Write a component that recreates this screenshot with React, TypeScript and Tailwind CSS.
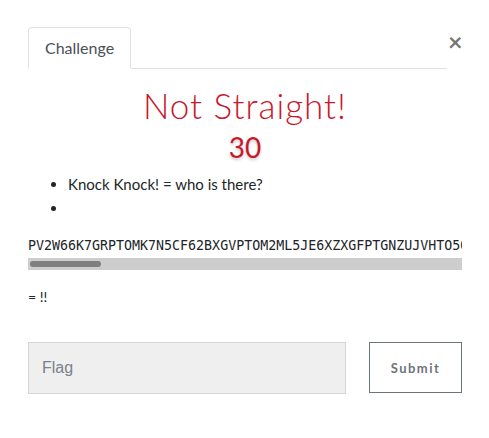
export default function App() {
  const code =
    'PV2W66K7GRPTOMK7N5CF62BXGVPTOM2ML5JE6XZXGFPTGNZUJVHTO5QXGZQXGFPTOMK7N5CF62BXGVPTOM2ML5JE6XZXG';

  return (
    <div className="h-[438px] w-[489px] bg-white font-['Lato',sans-serif] text-[#212529]">
      <div className="pl-[28px] pr-[27px] pt-[27px]">
        <div className="flex items-start">
          <div className="flex flex-1 border-b border-[#dee2e6]">
            <div className="-mb-px rounded-t-[4px] border border-[#dee2e6] border-b-white bg-white px-[16px] pb-[10px] pt-[9px] text-[16px] leading-[21px] text-[#495057]">
              Challenge
            </div>
          </div>
          <button className="ml-[1px] mt-[3px] w-[14px] text-[25px] font-bold leading-[22px] text-[#777]">
            ×
          </button>
        </div>

        <div className="pt-[14px] text-center">
          <h1 className="font-['Lato',sans-serif] text-[35px] font-light leading-[44px] tracking-[1px] text-[#c9182b]">
            Not Straight!
          </h1>
          <div className="mt-[3px] text-[28px] leading-[34px] text-[#c9182b] [text-shadow:0_2px_3px_rgba(0,0,0,0.2)]">
            30
          </div>
        </div>

        <ul className="mt-[8px] list-disc pl-[40px] text-[15px] leading-[24px]">
          <li>Knock Knock! = who is there?</li>
          <li>&nbsp;</li>
        </ul>

        <div className="mt-[17px]">
          <pre className="overflow-hidden whitespace-pre font-['DejaVu_Sans_Mono',monospace] text-[13.3px] leading-[17px] text-[#212529]">
            {code}
          </pre>
          <div className="mt-[4px] flex h-[12px] items-center bg-[#cdcdcd] px-[2px]">
            <div className="h-[6px] w-[71px] rounded-full bg-[#7f7f7f]" />
          </div>
        </div>

        <p className="mt-[17px] text-[14px] leading-[20px]">= !!</p>

        <div className="mt-[35px] flex items-stretch gap-[23px]">
          <input
            placeholder="Flag"
            className="h-[52px] w-[318px] border border-[#d5d5d5] bg-[#efefef] px-[13px] font-['Liberation_Sans',sans-serif] text-[16px] text-[#495057] outline-none placeholder:text-[#7a8189]"
          />
          <button className="h-[51px] w-[93px] border border-[#6c757d] bg-white pt-[2px] text-[13px] font-bold tracking-[1.5px] text-[#6c757d]">
            Submit
          </button>
        </div>
      </div>
    </div>
  );
}
